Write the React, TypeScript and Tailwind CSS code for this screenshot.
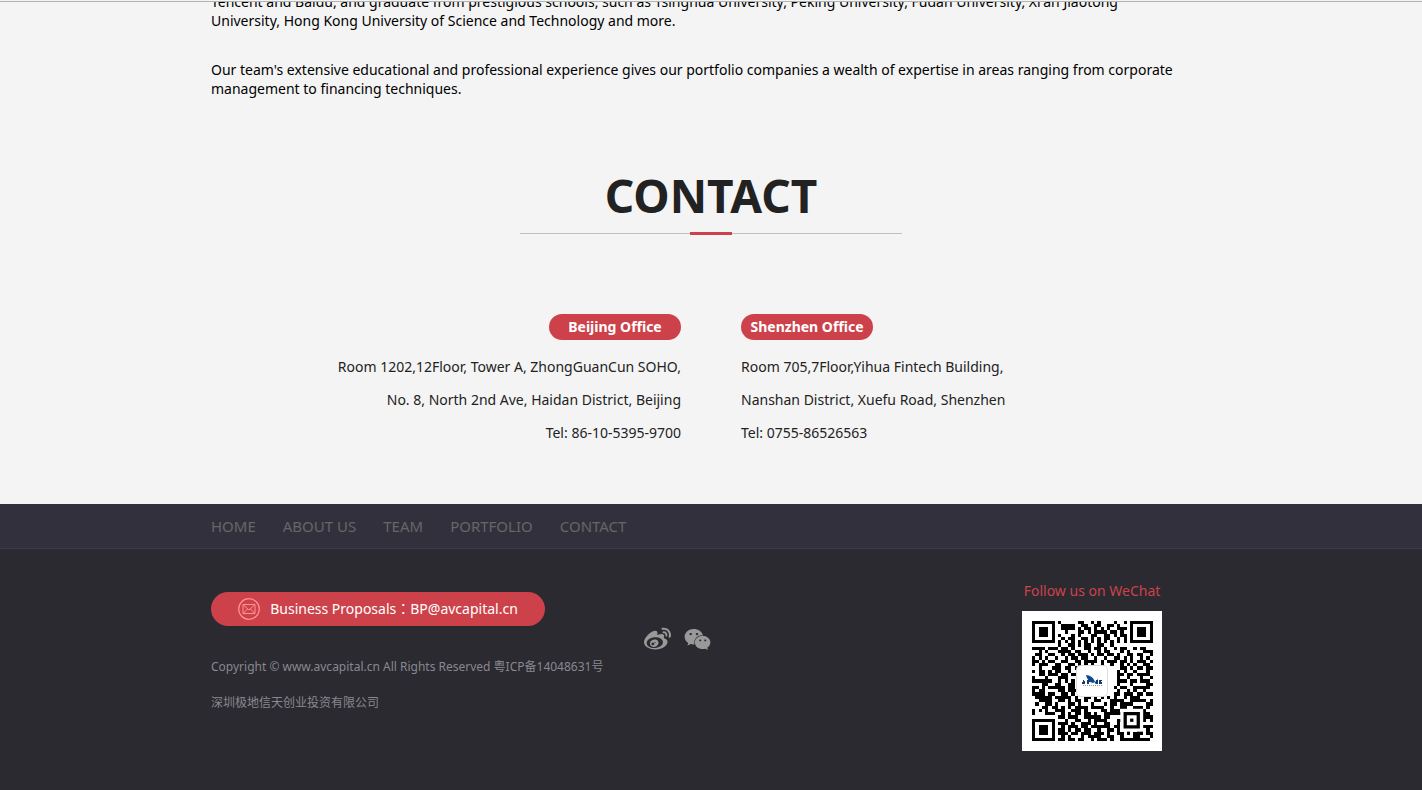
import React from "react";
import { FaWeibo, FaWeixin } from "react-icons/fa";

const NAV_LINKS = ["HOME", "ABOUT US", "TEAM", "PORTFOLIO", "CONTACT"];

const OFFICES = [
  {
    name: "Beijing Office",
    lines: ["Room 1202,12Floor, Tower A, ZhongGuanCun SOHO,", "No. 8, North 2nd Ave, Haidan District, Beijing", "Tel: 86-10-5395-9700"],
    align: "items-end text-right",
  },
  {
    name: "Shenzhen Office",
    lines: ["Room 705,7Floor,Yihua Fintech Building,", "Nanshan District, Xuefu Road, Shenzhen", "Tel: 0755-86526563"],
    align: "items-start",
  },
];

const QR_ROWS = [
  "#######.#.....##..#.#....#..#.#######",
  "#.....#..####..##..##..##.#...#.....#",
  "#.###.#..####.#.##.#.#.#..###.#.###.#",
  "#.###.#...#...##.#.####.##.#..#.###.#",
  "#.###.#.#...#.#...##..##.#.##.#.###.#",
  "#.....#..#.##..##.#.#.##..#.#.#.....#",
  "#######.#.#.#.#.#.#.#.#.#.#.#.#######",
  "........#..##.#.##..##..#............",
  "####.###.##.#...##.##.#..#.##..#.##..",
  "..#.#...####.##..#..#.##...#.#....###",
  ".##..##..#.##.###.#.##.##.#..##.##..#",
  "#.#.#..#..#.##.##..#..#..##.#.#..#.#.",
  "##.#.##..##..##.####.#.###.##.#.###.#",
  "#.###..##..##.#.#.#..#..#..#.#.#..##.",
  "..#...###.##.##............##.#.##.##",
  "#.##.#.##..#..............#.#..#...#.",
  "..##.###.##.##............##.##.####.",
  "#...#...###...............#..#...#..#",
  "######..#.#.#.............###.##.###.",
  "...##..##..##.............#...#....##",
  "##.#.#####.##............#.##..#####.",
  "#.##....##.###............#..#.#..#..",
  "####.##..##.#.#..........##.###.##.##",
  ".#####.#####.#..##.#.#.#.#..#.###....",
  "..####..##.#.##.#..##...####..#####.#",
  ".#..##.#...##.#...#...#.##.####....##",
  "...##.##.#.#.####.####..#..##..###.#.",
  "#.#.#..###..###.#....##.###.##.#.##..",
  "#...###..#.#.##.##.#..########.##.##.",
  "........##.###..#####.##....#...#####",
  "#######...#..##..#.####...###.#.#.#.#",
  "#.....#.###.#..###.#..##..#.#...##...",
  "#.###.#..#.###.##.######.##.#########",
  "#.###.#.##.#.##.##..#..##.#..#..##.#.",
  "#.###.#.###.##.###.###.#..##.#.###.##",
  "#.....#..#.#...#.####..##..#...##...#",
  "#######.##.##.##..#.###.#..#########.",
];

// one path for all modules, so no seams show between neighbours
const QR_PATH = QR_ROWS.map((row, y) =>
  row.split("").map((cell, x) => (cell === "#" ? `M${x} ${y}h1v1h-1z` : "")).join("")
).join("");

function QrCode() {
  return (
    <svg viewBox="0 0 140 140" className="size-[140px] bg-white" role="img" aria-label="WeChat QR code">
      <g transform="translate(10 9.5) scale(3.27)">
        <path d={QR_PATH} fill="#000" shapeRendering="crispEdges" />
        <path d="M27 27h7v7h-7z" fill="#fff" />
        <path d="M28 28h5v5h-5zM29 29v3h3v-3z" fill="#000" fillRule="evenodd" />
        <path d="M30 30h1v1h-1z" fill="#000" />
      </g>
      <rect x="54.5" y="54.5" width="31" height="31" rx="4" fill="#fff" stroke="#ddd" />
      <path d="M64 64c4 0 8 3 9 7l-2 1c-4-1-6-4-7-8zM73 71l3-3 0 3-3 2z" fill="#0b4a8f" />
      <path d="M61 69h1v1h1v3h-3v-2h1zM65 69h2v1h1v1h-1v2h-2zM74 69h2v4h-2zM77 69h3v1h-1v1h1v2h-3z" fill="#123c70" />
      <path d="M61 74.5h19" stroke="#999" strokeDasharray="1 1" />
    </svg>
  );
}

function MailIcon() {
  return (
    <svg viewBox="0 0 22 22" className="size-[22px]" fill="none" stroke="#ff9292" aria-hidden="true">
      <circle cx="11" cy="11" r="10.3" strokeWidth="1.2" />
      <path d="M5 6.5h12v9H5zM5.500 7l5.500 5 5.500-5M5.500 15l4-4M16.500 15l-4-4" />
    </svg>
  );
}

export default function App() {
  return (
    <div className="flex min-h-screen flex-col bg-[#f4f4f4] font-['Noto_Sans','Noto_Sans_CJK_SC',sans-serif] text-sm text-[#222]">
      <header className="h-0.5 border-b border-[#b0b3b0]" />

      <main className="overflow-hidden">
        <section className="mx-auto -mt-2.5 max-w-[1000px] leading-[19px] text-black">
          <p>
            Tencent and Baidu, and graduate from prestigious schools, such as Tsinghua University, Peking University, Fudan University, Xi'an Jiaotong
            <br />
            University, Hong Kong University of Science and Technology and more.
          </p>
          <p className="mt-[30px]">
            Our team's extensive educational and professional experience gives our portfolio companies a wealth of expertise in areas ranging from corporate
            <br />
            management to financing techniques.
          </p>
        </section>

        <section className="mx-auto max-w-[1000px] pt-16 pb-[55px]">
          <h2 className="pb-1 text-center text-[46px] leading-[66px] font-bold">CONTACT</h2>
          <div className="mx-auto flex h-[3px] w-[382px] items-center">
            <span className="h-px flex-1 bg-[#c0c0c0]" />
            <span className="h-[3px] w-[42px] bg-[#cd424a]" />
            <span className="h-px flex-1 bg-[#c0c0c0]" />
          </div>

          <div className="mt-[79px] grid grid-cols-2 gap-[60px]">
            {OFFICES.map((office) => (
              <div key={office.name} className={`flex flex-col ${office.align}`}>
                <h3 className="mb-2.5 w-[132px] rounded-full bg-[#cd424a] text-center leading-[26px] font-bold text-white">{office.name}</h3>
                {office.lines.map((line) => (
                  <p key={line} className="leading-[33px]">{line}</p>
                ))}
              </div>
            ))}
          </div>
        </section>
      </main>

      <footer className="flex-1 bg-[#2b2a30] text-[#88888f]">
        <nav className="border-b border-[#3e3b4b] bg-[#33303d]">
          <div className="mx-auto flex max-w-[1000px] gap-[27px] text-[15px] leading-[44px] text-[#666]">
            {NAV_LINKS.map((link) => (
              <a key={link} href="#">{link}</a>
            ))}
          </div>
        </nav>

        <div className="mx-auto flex max-w-[1000px] items-start">
          <div className="w-[433px] pt-[43px] text-xs">
            <a href="mailto:BP@avcapital.cn" className="flex h-[34px] w-[334px] items-center justify-center gap-2.5 rounded-full bg-[#cd424a] font-['Noto_Sans','Noto_Sans_CJK_TC',sans-serif] text-sm text-white">
              <MailIcon />
              <span>Business Proposals：BP@avcapital.cn</span>
            </a>
            <p className="mt-[23px] leading-9">Copyright © www.avcapital.cn All Rights Reserved 粤ICP备14048631号</p>
            <p className="leading-9">深圳极地信天创业投资有限公司</p>
          </div>

          <div className="flex gap-[13px] pt-[77px] text-[#999]">
            <a href="#" aria-label="Weibo"><FaWeibo className="size-[27px]" /></a>
            <a href="#" aria-label="WeChat"><FaWeixin className="size-[27px]" /></a>
          </div>

          <div className="mr-[49px] ml-auto flex flex-col items-center pt-8">
            <p className="leading-5 text-[#cd424a]">Follow us on WeChat</p>
            <div className="mt-2.5"><QrCode /></div>
          </div>
        </div>
      </footer>
    </div>
  );
}
